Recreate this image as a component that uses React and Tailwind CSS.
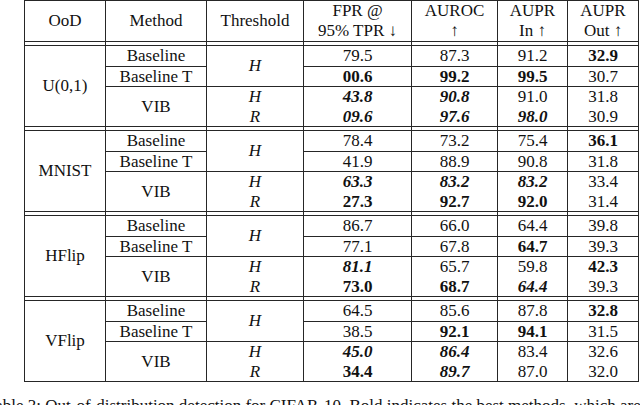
const W = ["w-[81px]", "w-[101px]", "w-[97px]", "w-[108px]", "w-[86px]", "w-[70px]", "w-[71px]"];
const NUM_W = W.slice(3);
const ROW_H = ["h-[21px] border-b", "h-[20px] border-b", "h-[20px]", "h-[20px] border-b"];
const STYLE = { "": "", b: "font-bold", bi: "font-bold italic" };

// [value, style] per metric, rows: Baseline, Baseline T, VIB H, VIB R
const groups = [
  {
    name: "U(0,1)",
    rows: [
      [["79.5", ""], ["87.3", ""], ["91.2", ""], ["32.9", "b"]],
      [["00.6", "b"], ["99.2", "b"], ["99.5", "b"], ["30.7", ""]],
      [["43.8", "bi"], ["90.8", "bi"], ["91.0", ""], ["31.8", ""]],
      [["09.6", "bi"], ["97.6", "bi"], ["98.0", "bi"], ["30.9", ""]],
    ],
  },
  {
    name: "MNIST",
    rows: [
      [["78.4", ""], ["73.2", ""], ["75.4", ""], ["36.1", "b"]],
      [["41.9", ""], ["88.9", ""], ["90.8", ""], ["31.8", ""]],
      [["63.3", "bi"], ["83.2", "bi"], ["83.2", "bi"], ["33.4", ""]],
      [["27.3", "b"], ["92.7", "b"], ["92.0", "b"], ["31.4", ""]],
    ],
  },
  {
    name: "HFlip",
    rows: [
      [["86.7", ""], ["66.0", ""], ["64.4", ""], ["39.8", ""]],
      [["77.1", ""], ["67.8", ""], ["64.7", "b"], ["39.3", ""]],
      [["81.1", "bi"], ["65.7", ""], ["59.8", ""], ["42.3", "b"]],
      [["73.0", "b"], ["68.7", "b"], ["64.4", "bi"], ["39.3", ""]],
    ],
  },
  {
    name: "VFlip",
    rows: [
      [["64.5", ""], ["85.6", ""], ["87.8", ""], ["32.8", "b"]],
      [["38.5", ""], ["92.1", "b"], ["94.1", "b"], ["31.5", ""]],
      [["45.0", "bi"], ["86.4", "bi"], ["83.4", ""], ["32.6", ""]],
      [["34.4", "b"], ["89.7", "bi"], ["87.0", ""], ["32.0", ""]],
    ],
  },
];

const headers = [
  ["OoD"],
  ["Method"],
  ["Threshold"],
  ["FPR @", "95% TPR ↓"],
  ["AUROC", "↑"],
  ["AUPR", "In ↑"],
  ["AUPR", "Out ↑"],
];

const Separator = () => (
  <div className="flex h-[4px] border-b border-[#262626]">
    {W.map((w, i) => (
      <div key={i} className={`${w} h-full border-r border-[#262626]`} />
    ))}
  </div>
);

const Group = ({ group }) => (
  <div className="flex">
    <div className={`${W[0]} flex items-center justify-center border-r border-b border-[#262626]`}>
      {group.name}
    </div>

    {/* method column */}
    <div className={`${W[1]} flex flex-col`}>
      <div className="h-[21px] flex items-center justify-center border-r border-b border-[#262626]">Baseline</div>
      <div className="h-[20px] flex items-center justify-center border-r border-b border-[#262626]">Baseline T</div>
      <div className="h-[40px] flex items-center justify-center border-r border-b border-[#262626]">VIB</div>
    </div>

    {/* threshold column */}
    <div className={`${W[2]} flex flex-col`}>
      <div className="h-[41px] flex items-center justify-center border-r border-b border-[#262626] italic">H</div>
      <div className="h-[40px] flex flex-col border-r border-b border-[#262626] italic">
        <div className="h-[20px] flex items-center justify-center">H</div>
        <div className="h-[19px] flex items-center justify-center">R</div>
      </div>
    </div>

    {NUM_W.map((w, c) => (
      <div key={c} className={`${w} flex flex-col`}>
        {group.rows.map((row, r) => (
          <div
            key={r}
            className={`${ROW_H[r]} flex items-center justify-center border-r border-[#262626] ${STYLE[row[c][1]]}`}
          >
            {row[c][0]}
          </div>
        ))}
      </div>
    ))}
  </div>
);

export default function App() {
  return (
    <div className="w-[640px] h-[405px] overflow-hidden bg-white text-[#111] text-[17px] font-normal font-[family-name:'Liberation_Serif','Times_New_Roman',serif]">
      <div className="ml-[24px] w-[615px] border-l border-t border-[#262626]">
        {/* header */}
        <div className="flex h-[41px] border-b border-[#262626]">
          {headers.map((h, i) => (
            <div
              key={i}
              className={`${W[i]} flex flex-col items-center justify-center border-r border-[#262626] leading-[20px]`}
            >
              {h.map((line, j) => (
                <span key={j}>{line}</span>
              ))}
            </div>
          ))}
        </div>
        <Separator />
        {groups.map((g, i) => (
          <div key={g.name}>
            <Group group={g} />
            {i < groups.length - 1 && <Separator />}
          </div>
        ))}
      </div>

      {/* caption, mostly cut off by the frame */}
      <p className="mt-[14px] ml-[-14px] whitespace-nowrap leading-[20px] text-[17px]">
        Table 3: Out-of-distribution detection for CIFAR-10. Bold indicates the best methods, which are highlighted
      </p>
    </div>
  );
}
